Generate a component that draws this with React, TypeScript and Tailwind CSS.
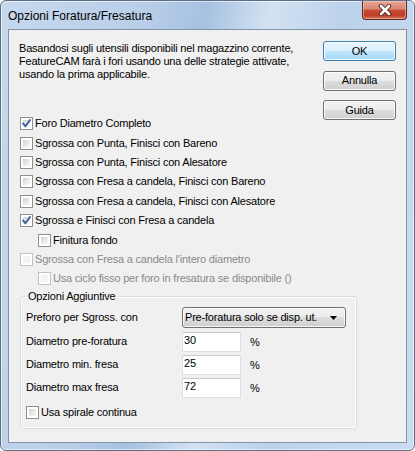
import React from 'react';

const FONT = { fontFamily: '"Liberation Sans", Arial, sans-serif' };

interface BoxProps {
  checked?: boolean;
  disabled?: boolean;
}

const CheckBox: React.FC<BoxProps> = ({ checked, disabled }) => (
  <span
    className={`relative flex w-[13px] h-[13px] shrink-0 border p-[2px] bg-white ${
      disabled ? 'border-[#c2c2c2]' : 'border-[#8e8f8f]'
    }`}
  >
    <span
      className={`flex-1 ${
        disabled
          ? 'bg-[#f4f4f4]'
          : 'bg-[linear-gradient(135deg,#cdd1d6_0%,#e6e8ea_50%,#f8f8f8_100%)]'
      }`}
    />
    {checked && (
      <svg className="absolute left-[0px] top-[0px]" width="11" height="11" viewBox="0 0 11 11">
        <path d="M2.2 5.6 L4.4 8.2 L8.9 2.2" fill="none" stroke="#41609c" strokeWidth="1.9" strokeLinecap="square" />
      </svg>
    )}
  </span>
);

interface RowProps {
  label: string;
  checked?: boolean;
  disabled?: boolean;
  indent?: boolean;
}

const CheckRow: React.FC<RowProps> = ({ label, checked, disabled, indent }) => (
  <div className={`flex items-center gap-[2px] h-[19.4px] ${indent ? 'pl-[18px]' : ''}`}>
    <CheckBox checked={checked} disabled={disabled} />
    <span className={`whitespace-nowrap leading-[13px] ${disabled ? 'text-[#8a8a8a]' : 'text-black'}`}>{label}</span>
  </div>
);

const DlgButton: React.FC<{ label: string; primary?: boolean }> = ({ label, primary }) => (
  <button
    className={`h-[20px] w-[73px] rounded-[3px] border text-[11px] leading-[13px] text-black shadow-[inset_0_0_0_1px_rgba(255,255,255,0.8)] ${
      primary
        ? 'border-[#3c7fb1] bg-[linear-gradient(#eaf6fd_0%,#d9f0fc_50%,#bee6fd_50%,#a7d9f5_100%)]'
        : 'border-[#707070] bg-[linear-gradient(#f2f2f2_0%,#ebebeb_50%,#dddddd_50%,#cfcfcf_100%)]'
    }`}
  >
    {label}
  </button>
);

const NumField: React.FC<{ label: string; value: string }> = ({ label, value }) => (
  <div className="flex items-center h-[20px]">
    <span className="w-[156px] whitespace-nowrap">{label}</span>
    <div className="w-[59px] h-[20px] border border-[#dbdfe6] border-t-[#c5c9d0] bg-white pl-[1px] flex items-center">
      <span className="leading-[13px] -mt-[2px]">{value}</span>
    </div>
    <span className="ml-[9px] mt-[2px]">%</span>
  </div>
);

export default function App() {
  return (
    <div className="w-[415px] h-[451px] bg-white text-[11px] tracking-[-0.2px] text-black" style={FONT}>
      <div className="relative flex flex-col w-[415px] h-[451px] rounded-[6px] border border-[#5e7088] px-[7px] pb-[7px] shadow-[inset_0_0_0_1px_rgba(255,255,255,0.55)] bg-[linear-gradient(100deg,#c6d8ed_0%,#b8cee8_30%,#a6c1e1_42%,#d3e2f2_55%,#bcd2eb_70%,#cbdcf0_100%)]">
        {/* title bar */}
        <div className="h-[28px] flex items-center">
          <span className="text-[12px] tracking-normal leading-[14px] mt-[1px]">Opzioni Foratura/Fresatura</span>
        </div>
        <div className="absolute right-[7px] top-0 w-[45px] h-[19px] rounded-b-[4px] border border-t-0 border-[#5b2a20] flex items-center justify-center bg-[linear-gradient(#e8a796_0%,#d98571_45%,#c74a32_52%,#c13f27_80%,#d8755c_100%)] shadow-[inset_0_0_0_1px_rgba(255,220,210,0.45)]">
          <svg width="14" height="12" viewBox="0 0 14 12">
            <path d="M3 2 L11 10 M11 2 L3 10" stroke="#4a2218" strokeWidth="4.4" strokeLinecap="round" />
            <path d="M3 2 L11 10 M11 2 L3 10" stroke="#ffffff" strokeWidth="2.6" strokeLinecap="round" />
          </svg>
        </div>

        {/* client area */}
        <div className="flex-1 border border-[#8394a8] bg-[#f0f0f0]">
          <div className="grid grid-cols-[294px_73px] gap-x-[10px] pl-[10px] pt-[11px]">
            <p className="leading-[13px] pt-[1px]">
              Basandosi sugli utensili disponibili nel magazzino corrente,
              <br />
              FeatureCAM farà i fori usando una delle strategie attivate,
              <br />
              usando la prima applicabile.
            </p>
            <div className="row-span-2 flex flex-col gap-[9.5px]">
              <DlgButton label="OK" primary />
              <DlgButton label="Annulla" />
              <DlgButton label="Guida" />
            </div>
            <div className="mt-[33px] ml-[1px] flex flex-col">
              <CheckRow label="Foro Diametro Completo" checked />
              <CheckRow label="Sgrossa con Punta, Finisci con Bareno" />
              <CheckRow label="Sgrossa con Punta, Finisci con Alesatore" />
              <CheckRow label="Sgrossa con Fresa a candela, Finisci con Bareno" />
              <CheckRow label="Sgrossa con Fresa a candela, Finisci con Alesatore" />
              <CheckRow label="Sgrossa e Finisci con Fresa a candela" checked />
              <CheckRow label="Finitura fondo" indent />
              <CheckRow label="Sgrossa con Fresa a candela l'intero diametro" disabled />
              <CheckRow label="Usa ciclo fisso per foro in fresatura se disponibile ()" disabled indent />
            </div>
            <fieldset className="col-span-2 mt-[1px] ml-[1px] w-[337px] rounded-[3px] border border-[#d5dfe5] px-[5px] pt-[4px] pb-[6px] shadow-[inset_0_0_0_1px_#ffffff]">
              <legend className="px-[2px] leading-[13px]">Opzioni Aggiuntive</legend>
              <div className="flex flex-col gap-[3px]">
                <div className="flex items-center h-[21px] mb-[1px]">
                  <span className="w-[156px] whitespace-nowrap">Preforo per Sgross. con</span>
                  <div className="relative w-[164px] h-[21px] rounded-[3px] border border-[#707070] bg-[linear-gradient(#f2f2f2_0%,#ebebeb_50%,#dddddd_50%,#cfcfcf_100%)] shadow-[inset_0_0_0_1px_rgba(255,255,255,0.8)] flex items-center pl-[2px]">
                    <span className="whitespace-nowrap leading-[13px]">Pre-foratura solo se disp. ut.</span>
                    <svg className="absolute right-[8px] top-[8px]" width="7" height="4" viewBox="0 0 7 4">
                      <path d="M0 0 H7 L3.5 4 Z" fill="#000" />
                    </svg>
                  </div>
                </div>
                <NumField label="Diametro pre-foratura" value="30" />
                <NumField label="Diametro min. fresa" value="25" />
                <NumField label="Diametro max fresa" value="72" />
              </div>
              <div className="mt-[5px]">
                <CheckRow label="Usa spirale continua" />
              </div>
            </fieldset>
          </div>
        </div>
      </div>
    </div>
  );
}
